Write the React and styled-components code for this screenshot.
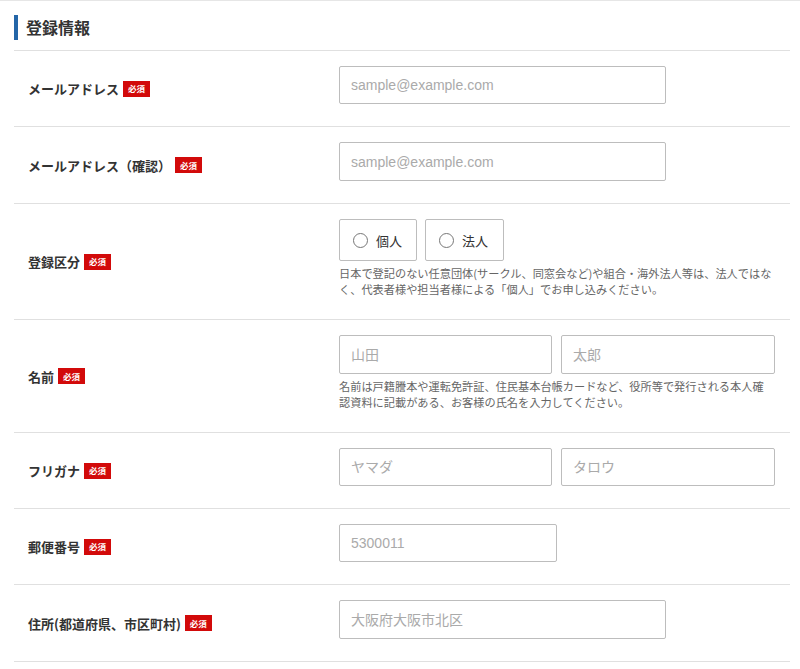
import React from "react";
import styled, { createGlobalStyle } from "styled-components";

// --------------------------------------------------

const Global = createGlobalStyle`
	html, body {
		margin: 0;
		padding: 0;
		background: #fff;
	}
	body {
		font-family: "Noto Sans CJK JP", "Liberation Sans", sans-serif;
		color: #333;
	}
	* { box-sizing: border-box; }
`;

const Page = styled.div`
	width: 800px;
	border-top: 1px solid #e6e6e6;
	padding: 14px 10px 0 14px;
`;

const Heading = styled.h2`
	margin: 0 0 10px;
	border-left: 4px solid #2466a8;
	padding-left: 8px;
	font-size: 16px;
	font-weight: 700;
	line-height: 25px;
	color: #333;
`;

const Table = styled.div`
	width: 776px;
	border-bottom: 1px solid #e0e0e0;
`;

const Row = styled.div`
	display: grid;
	grid-template-columns: 311px 1fr;
	align-items: center;
	border-top: 1px solid #e0e0e0;
	padding: 15px 15px 22px 14px;
`;

const Label = styled.div`
	display: flex;
	align-items: center;
	gap: 4px;
	font-size: 13px;
	font-weight: 700;
	color: #333;
	padding-top: 7px;
`;

const Badge = styled.span`
	display: inline-flex;
	align-items: center;
	justify-content: center;
	width: 27px;
	height: 16px;
	background: #d20a0a;
	color: #fff;
	font-size: 8.5px;
	font-weight: 700;
	line-height: 1;
`;

const Field = styled.div`
	display: flex;
	flex-direction: column;
`;

const Inputs = styled.div`
	display: flex;
	gap: ${({ gap }) => gap || 9}px;
`;

const Input = styled.input`
	width: ${({ w }) => w}px;
	height: ${({ h }) => h || 38}px;
	border: 1px solid #bdbdbd;
	border-radius: 2px;
	padding: 0 11px;
	font-size: 14px;
	font-family: "Liberation Sans", "Noto Sans CJK JP", sans-serif;
	color: #333;
	background: #fff;
	outline: none;

	&::placeholder {
		color: #aaa;
	}
`;

const RadioBox = styled.label`
	display: flex;
	align-items: center;
	gap: 8px;
	width: ${({ w }) => w}px;
	height: 42px;
	border: 1px solid #bdbdbd;
	border-radius: 2px;
	padding-left: 13px;
	font-size: 13px;
	color: #333;
`;

const Circle = styled.span`
	width: 15px;
	height: 15px;
	border: 1px solid #777;
	border-radius: 50%;
	background: #fff;
`;

const Note = styled.p`
	margin: 5px 0 0;
	font-size: 11.2px;
	line-height: 15.5px;
	color: #666;
	white-space: nowrap;
`;

// --------------------------------------------------

const Req = () => <Badge>必須</Badge>;

const FormRow = ({ label, children }) => (
	<Row>
		<Label>
			{ label }
			<Req />
		</Label>
		<Field>{ children }</Field>
	</Row>
);

const App = () => (
	<Page>
		<Global />
		<Heading>登録情報</Heading>

		<Table>
			<FormRow label = "メールアドレス">
				<Input w = { 327 } placeholder = "sample@example.com" />
			</FormRow>

			<FormRow label = "メールアドレス（確認）">
				<Input w = { 327 } h = { 39 } placeholder = "sample@example.com" />
			</FormRow>

			<FormRow label = "登録区分">
				<Inputs gap = { 8 }>
					<RadioBox w = { 78 }><Circle />個人</RadioBox>
					<RadioBox w = { 79 }><Circle />法人</RadioBox>
				</Inputs>
				<Note>
					日本で登記のない任意団体(サークル、同窓会など)や組合・海外法人等は、法人ではな<br />
					く、代表者様や担当者様による「個人」でお申し込みください。
				</Note>
			</FormRow>

			<FormRow label = "名前">
				<Inputs>
					<Input w = { 213 } h = { 39 } placeholder = "山田" />
					<Input w = { 214 } h = { 39 } placeholder = "太郎" />
				</Inputs>
				<Note>
					名前は戸籍謄本や運転免許証、住民基本台帳カードなど、役所等で発行される本人確<br />
					認資料に記載がある、お客様の氏名を入力してください。
				</Note>
			</FormRow>

			<FormRow label = "フリガナ">
				<Inputs>
					<Input w = { 213 } placeholder = "ヤマダ" />
					<Input w = { 214 } placeholder = "タロウ" />
				</Inputs>
			</FormRow>

			<FormRow label = "郵便番号">
				<Input w = { 218 } placeholder = "5300011" />
			</FormRow>

			<FormRow label = "住所(都道府県、市区町村)">
				<Input w = { 327 } h = { 39 } placeholder = "大阪府大阪市北区" />
			</FormRow>
		</Table>
	</Page>
);

export default App;
